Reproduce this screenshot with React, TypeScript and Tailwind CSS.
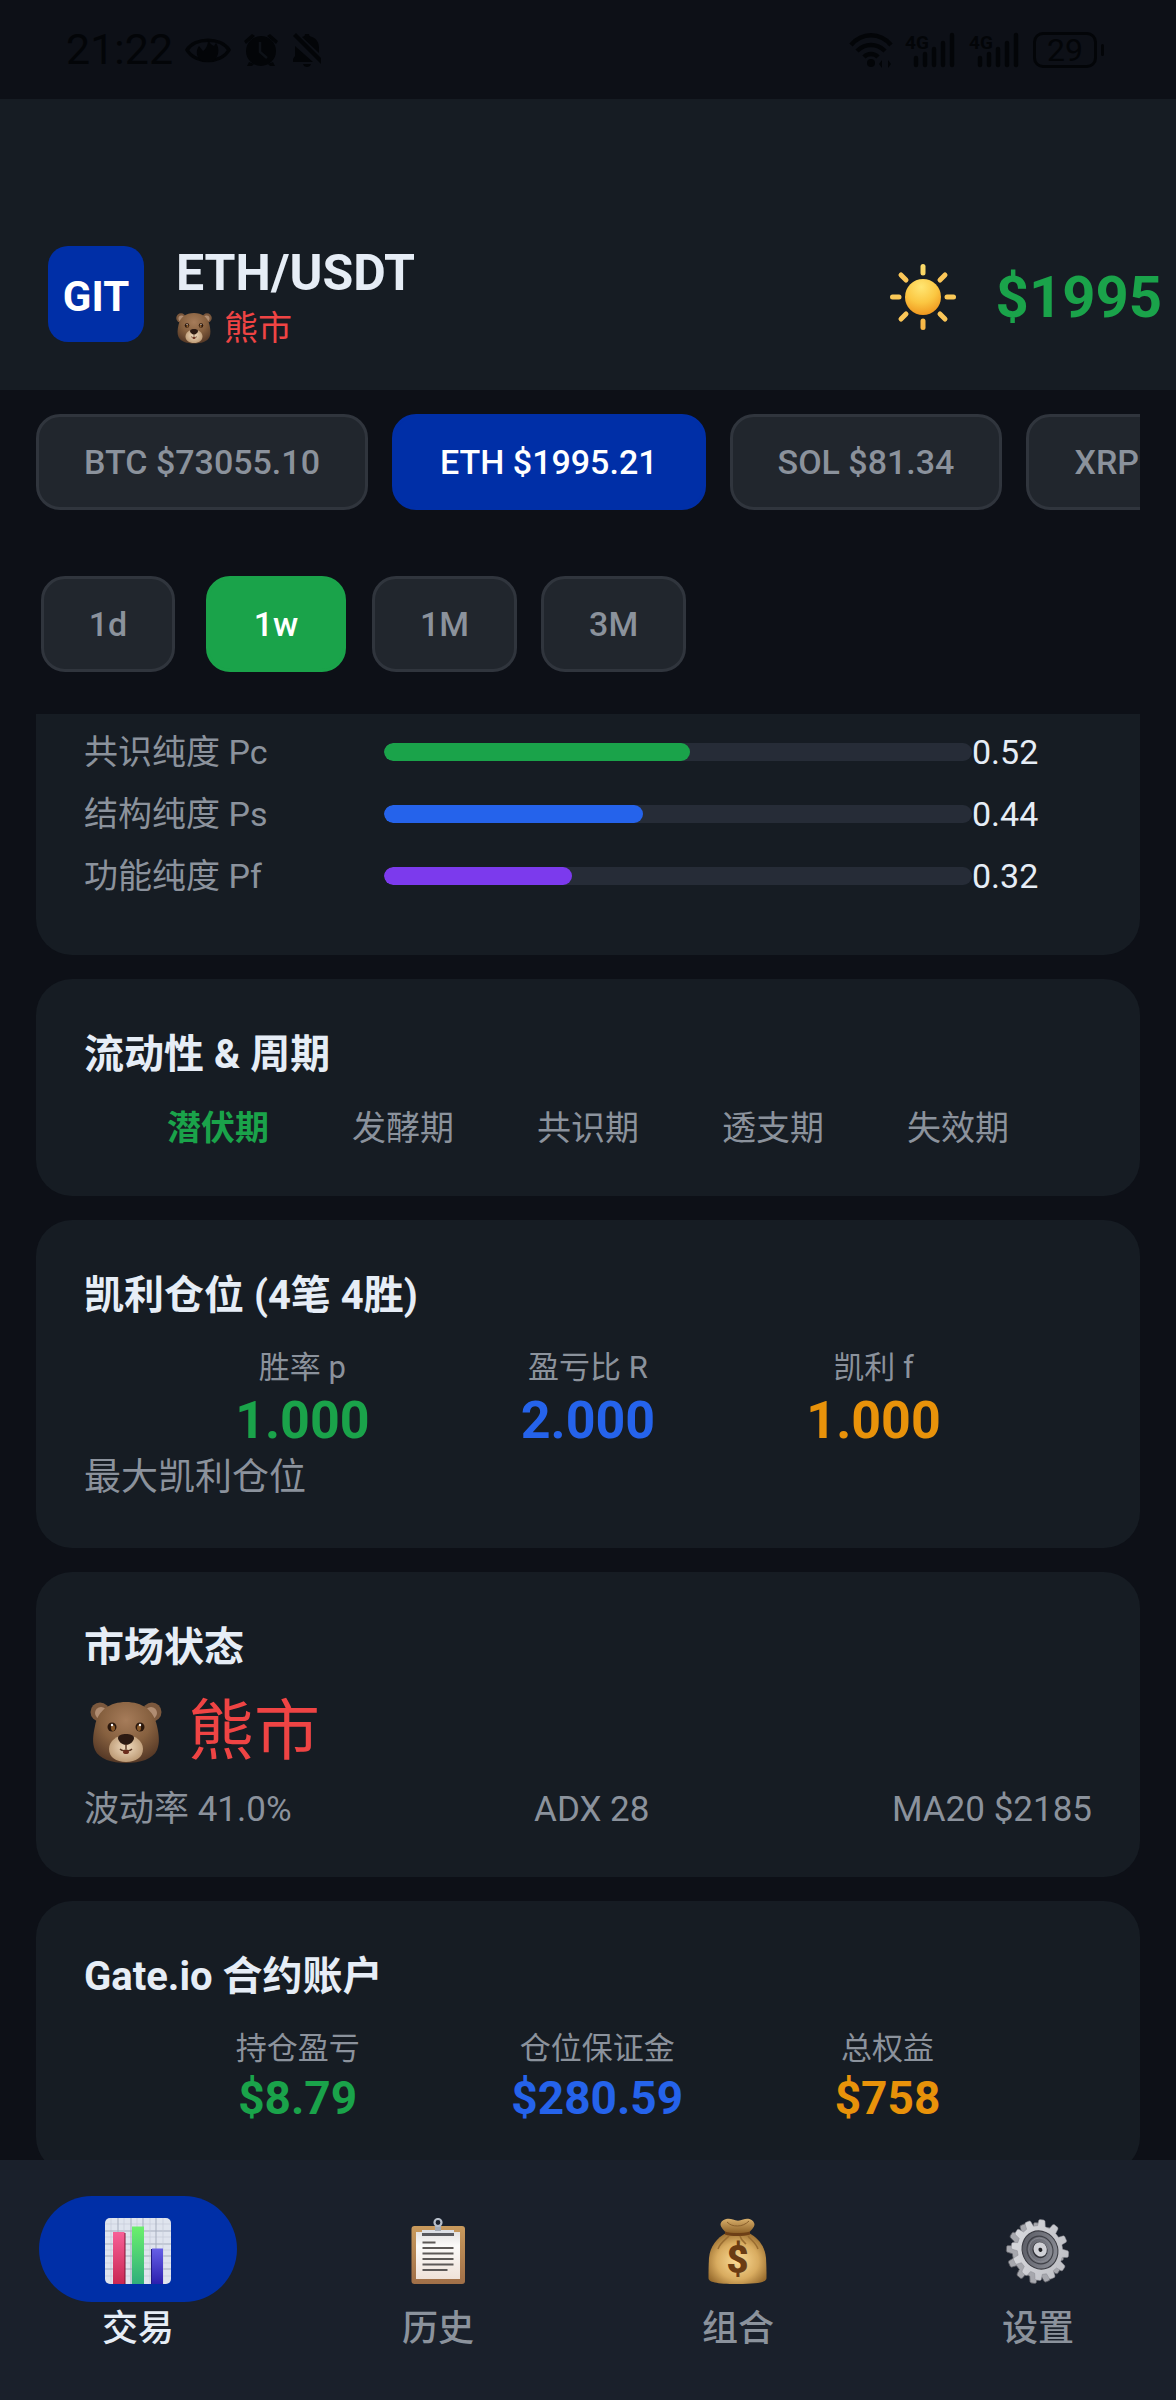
import { useState } from "react";
import clsx from "clsx";

const coins = [
  { symbol: "BTC", price: "73055.10" },
  { symbol: "ETH", price: "1995.21" },
  { symbol: "SOL", price: "81.34" },
  { symbol: "XRP", price: "1.35" },
];

const periods = ["1d", "1w", "1M", "3M"];

const purity = [
  { label: "共识纯度 Pc", value: 0.52, color: "bg-[#1aa34a]" },
  { label: "结构纯度 Ps", value: 0.44, color: "bg-[#2563eb]" },
  { label: "功能纯度 Pf", value: 0.32, color: "bg-[#7c3aed]" },
];

const stages = ["潜伏期", "发酵期", "共识期", "透支期", "失效期"];

const kelly = [
  { label: "胜率 p", value: "1.000", color: "text-[#1aa34a]" },
  { label: "盈亏比 R", value: "2.000", color: "text-[#2563eb]" },
  { label: "凯利 f", value: "1.000", color: "text-[#e8920a]" },
];

const account = [
  { label: "持仓盈亏", value: "$8.79", color: "text-[#1aa34a]" },
  { label: "仓位保证金", value: "$280.59", color: "text-[#2563eb]" },
  { label: "总权益", value: "$758", color: "text-[#e8920a]" },
];

const tabs = [
  { label: "交易", icon: <ChartIcon /> },
  { label: "历史", icon: <ClipboardIcon /> },
  { label: "组合", icon: <MoneyBagIcon /> },
  { label: "设置", icon: <GearIcon /> },
];

function BearIcon({ id, className }: { id: string; className: string }) {
  return (
    <svg viewBox="0 0 72 62" className={className} aria-hidden="true">
      <defs>
        <radialGradient id={`${id}-fur`} cx="50%" cy="30%" r="70%">
          <stop offset="0" stopColor="#a67c5a" />
          <stop offset="0.55" stopColor="#86603f" />
          <stop offset="1" stopColor="#573a27" />
        </radialGradient>
        <radialGradient id={`${id}-muzzle`} cx="50%" cy="45%" r="60%">
          <stop offset="0" stopColor="#f1dcc0" />
          <stop offset="1" stopColor="#b8956f" />
        </radialGradient>
      </defs>
      <circle cx="10" cy="11" r="9.5" fill="#7b583d" />
      <circle cx="62" cy="11" r="9.5" fill="#7b583d" />
      <circle cx="11" cy="12" r="6" fill="#b08d72" />
      <circle cx="61" cy="12" r="6" fill="#b08d72" />
      <path
        d="M36 1C52 1 64 9 67 25c2 9 3 17 0 24-4 9-17 13-31 13S9 58 5 49c-3-7-2-15 0-24C8 9 20 1 36 1Z"
        fill={`url(#${id}-fur)`}
      />
      <path
        d="M36 34c9 0 17 6 17 14S46 61 36 61s-17-5-17-13 8-14 17-14Z"
        fill={`url(#${id}-muzzle)`}
      />
      <path d="M28 37c0-3 4-4 8-4s8 1 8 4-4 7-8 7-8-4-8-7Z" fill="#2c1a12" />
      <path d="M36 43v5M30 48c2 2 4 2 6 1 2 1 4 1 6-1" fill="none" stroke="#5a3723" strokeWidth="1.4" />
      <ellipse cx="36" cy="51" rx="3" ry="2" fill="#6b2d1d" />
      <ellipse cx="22" cy="26" rx="4.5" ry="4.5" fill="#2a170c" />
      <ellipse cx="50" cy="26" rx="4.5" ry="4.5" fill="#2a170c" />
      <ellipse cx="23" cy="27" rx="2" ry="3" fill="#8a5a2b" />
      <ellipse cx="49" cy="27" rx="2" ry="3" fill="#8a5a2b" />
      <circle cx="22" cy="24" r="1.2" fill="#fff" />
      <circle cx="50" cy="24" r="1.2" fill="#fff" />
    </svg>
  );
}

function SunIcon() {
  return (
    <svg viewBox="0 0 66 66" className="size-[66px]" aria-hidden="true">
      <defs>
        <radialGradient id="sun-disc" cx="45%" cy="22%" r="80%">
          <stop offset="0" stopColor="#ffe673" />
          <stop offset="0.55" stopColor="#fbc742" />
          <stop offset="1" stopColor="#ef951d" />
        </radialGradient>
        <linearGradient id="sun-ray" gradientUnits="userSpaceOnUse" x1="0" y1="0" x2="0" y2="66">
          <stop offset="0" stopColor="#fbdc6a" />
          <stop offset="1" stopColor="#f9b544" />
        </linearGradient>
      </defs>
      <circle cx="33" cy="33" r="18" fill="url(#sun-disc)" />
      <g fill="url(#sun-ray)">
        <rect x="30.5" y="0" width="5" height="11.5" rx="2.5" />
        <rect x="30.5" y="54.5" width="5" height="11.5" rx="2.5" />
        <rect x="0" y="30.5" width="11.5" height="5" rx="2.5" />
        <rect x="54.5" y="30.5" width="11.5" height="5" rx="2.5" />
      </g>
      <path
        d="m11 11 5 5M55 11l-5 5M11 55l5-5M55 55l-5-5"
        stroke="#fbc658"
        strokeWidth="5"
        strokeLinecap="round"
      />
    </svg>
  );
}

function ChartIcon() {
  const lines = [6, 13, 19, 26, 32, 38, 45, 51, 58];
  return (
    <svg viewBox="0 0 66 66" className="size-[66px]" aria-hidden="true">
      <defs>
        <linearGradient id="bar-red" x2="0" y2="1">
          <stop stopColor="#f75f97" />
          <stop offset="1" stopColor="#c92753" />
        </linearGradient>
        <linearGradient id="bar-green" x2="0" y2="1">
          <stop stopColor="#6bf06c" />
          <stop offset="1" stopColor="#2fae7c" />
        </linearGradient>
        <linearGradient id="bar-blue" x2="0" y2="1">
          <stop stopColor="#665fe6" />
          <stop offset="1" stopColor="#2b1fae" />
        </linearGradient>
      </defs>
      <rect width="66" height="66" rx="5" fill="#dfe4ee" />
      {lines.map((n, i) => (
        <path
          key={n}
          d={`M${n} 0V66M0 ${n}H66`}
          stroke={i % 2 ? "#a5adbd" : "#c6ccd8"}
          strokeWidth={i % 2 ? 1 : 0.7}
        />
      ))}
      <path d="M19 15h1.5V66H19Z" fill="#7d1434" />
      <rect x="8" y="14" width="11.5" height="52" fill="url(#bar-red)" />
      <rect x="27" y="8.5" width="12" height="57.5" fill="url(#bar-green)" />
      <path d="M46 31h1v35h-1Z" fill="#22187f" />
      <rect x="47" y="30.5" width="11" height="35.5" fill="url(#bar-blue)" />
    </svg>
  );
}

function ClipboardIcon() {
  return (
    <svg viewBox="0 0 66 66" className="size-[66px]" aria-hidden="true">
      <defs>
        <linearGradient id="board" x2="0" y2="1">
          <stop stopColor="#c99a5c" />
          <stop offset="1" stopColor="#a06f48" />
        </linearGradient>
        <linearGradient id="paper" x2="0" y2="1">
          <stop stopColor="#e4e2e2" />
          <stop offset="0.3" stopColor="#fbfaf9" />
          <stop offset="1" stopColor="#efe2d8" />
        </linearGradient>
      </defs>
      <rect x="6.5" y="8" width="53.5" height="58" rx="3" fill="url(#board)" />
      <rect x="11" y="14" width="44" height="47" fill="url(#paper)" />
      <path d="M17 13h32v5H17Z" fill="#58595e" />
      <path d="M17 12h32v3H17Z" fill="#dcdfe5" />
      <path d="M30 8h6v5h-6Z" fill="#a4abb5" />
      <circle cx="33" cy="4.5" r="3.5" fill="none" stroke="#b8bfca" strokeWidth="2.2" />
      <path
        d="M17.5 24.5h13M17.5 30h31M17.5 35.5h31M17.5 41h31M17.5 46.5h31M17.5 52h25"
        stroke="#5d5957"
        strokeWidth="2"
      />
    </svg>
  );
}

function MoneyBagIcon() {
  return (
    <svg viewBox="0 0 66 66" className="size-[66px]" aria-hidden="true">
      <defs>
        <radialGradient id="bag" cx="50%" cy="55%" r="60%">
          <stop offset="0" stopColor="#fbdc97" />
          <stop offset="0.6" stopColor="#d9ac60" />
          <stop offset="1" stopColor="#95692c" />
        </radialGradient>
        <linearGradient id="bag-neck" x2="0" y2="1">
          <stop stopColor="#d8ae6a" />
          <stop offset="1" stopColor="#8e6228" />
        </linearGradient>
      </defs>
      <path
        d="M15.5 6C17 1 23 0 28 1.5c3 1.5 7 1.5 10 0C43 0 48 1 49.5 6c0 4-4 6-5.5 9H21c-1.5-3-5.5-5-5.5-9Z"
        fill="url(#bag-neck)"
      />
      <path d="M22 4c3 3 6 4 10.5 4S41 6 44 3" fill="none" stroke="#8a602c" strokeWidth="1" />
      <path
        d="M21 15h23c9 5 16 13 17 25 .5 8 .5 14 .5 20 0 4-7 6-29 6s-29-2-29-6c0-6 0-12 .5-20C5 28 12 20 21 15Z"
        fill="url(#bag)"
      />
      <path d="M20 13.5c6 2 18 2 25 0v3c-7 2-19 2-25 0Z" fill="#6d3f16" />
      <path
        d="M24 18c-4 4-9 7-11 13M35 18c1 4 4 6 6 8M43 18c3 4 8 7 10 13"
        fill="none"
        stroke="#9a6d31"
        strokeWidth="1.5"
      />
      <text
        x="32.5"
        y="55"
        textAnchor="middle"
        fontFamily="Roboto, sans-serif"
        fontWeight="900"
        fontSize="38"
        fill="#6b3c13"
      >
        $
      </text>
    </svg>
  );
}

// outline of a toothed wheel around 0,0
function gearPath(teeth: number, outer: number, inner: number) {
  const step = (Math.PI * 2) / teeth;
  const points: string[] = [];
  for (let i = 0; i < teeth; i++) {
    const a = i * step;
    [
      [inner, -0.32],
      [outer - 1, -0.22],
      [outer, -0.14],
      [outer, 0.14],
      [outer - 1, 0.22],
      [inner, 0.32],
    ].forEach(([r, k]) => {
      const t = a + k * step;
      points.push(`${(Math.cos(t) * r).toFixed(2)} ${(Math.sin(t) * r).toFixed(2)}`);
    });
  }
  return `M${points.join("L")}Z`;
}

function GearIcon() {
  const wheel = gearPath(12, 32, 25.5);
  return (
    <svg viewBox="0 0 66 66" className="size-[66px]" aria-hidden="true">
      <defs>
        <linearGradient id="gear-face" x2="1" y2="1">
          <stop stopColor="#dcdde1" />
          <stop offset="1" stopColor="#babbc1" />
        </linearGradient>
        <linearGradient id="gear-dish" x2="1" y2="1">
          <stop stopColor="#55575f" />
          <stop offset="1" stopColor="#92949d" />
        </linearGradient>
      </defs>
      <g transform="translate(30 35) rotate(-24) scale(.88 .97)">
        <path d={wheel} fill="#a7a8ae" stroke="#5b5c63" strokeWidth="0.8" />
      </g>
      <g transform="translate(35 32) rotate(-24) scale(.88 .97)">
        <path d={wheel} fill="url(#gear-face)" stroke="#8a8b92" strokeWidth="0.5" />
        <circle r="20" fill="url(#gear-dish)" stroke="#3c3d44" strokeWidth="1.2" />
        <circle r="14.5" fill="none" stroke="#3f4047" strokeWidth="1.2" />
        <circle r="12.5" fill="none" stroke="#8b8c94" strokeWidth="0.8" />
        <circle r="8.5" fill="#33343a" />
        <circle cx="0.5" cy="-0.5" r="7.5" fill="#d0d1d6" />
        <circle cx="0.5" r="2.2" fill="#1d1e22" />
      </g>
    </svg>
  );
}

function SignalIcon() {
  return (
    <svg viewBox="0 0 52 36" className="h-9 w-[52px]" aria-hidden="true">
      <text x="0" y="17" fontFamily="Roboto, sans-serif" fontWeight="700" fontSize="19" fill="currentColor">
        4G
      </text>
      <path
        d="M11 26v7M20 22v11M29 17v16M38 11v22M47 3v30"
        stroke="currentColor"
        strokeWidth="4.5"
        strokeLinecap="round"
      />
    </svg>
  );
}

function StatusBar() {
  return (
    <div className="flex h-[99px] shrink-0 items-center justify-between pr-[72px] pl-[66px] text-[#030508]">
      <div className="flex items-center gap-3">
        <span className="text-[43px] leading-none">21:22</span>
        <svg viewBox="0 0 46 32" className="h-8 w-[46px]" aria-hidden="true">
          <path d="M2 16C10 3 36 3 44 16 36 30 10 30 2 16Z" fill="none" stroke="currentColor" strokeWidth="3.5" />
          <path d="M23 6c2 3 3 5 6 6l2-3c5 7 2 19-8 19s-14-9-9-16l4 5c3-2 5-6 5-11Z" fill="currentColor" />
        </svg>
        <svg viewBox="0 0 36 36" className="size-9" aria-hidden="true">
          <path d="M1 9 9 2l3 2-9 8ZM35 9l-8-7-3 2 9 8Z" fill="currentColor" />
          <path d="m6 30-2 4h5l2-2M30 30l2 4h-5l-2-2" fill="currentColor" />
          <circle cx="18" cy="19" r="15" fill="currentColor" />
          <path d="M17 10v10l7 6" fill="none" stroke="#0d1117" strokeWidth="2.5" />
        </svg>
        <svg viewBox="0 0 32 36" className="h-9 w-8" aria-hidden="true">
          <path
            d="M2 4 30 32v-6L5 1ZM11 5c2-1 3-1 3-3h4c0 2 1 2 3 3 5 2 7 6 7 11v5ZM4 14l18 16H2v-3l2-3ZM12 32h8c-1 4-7 4-8 0Z"
            fill="currentColor"
          />
        </svg>
      </div>
      <div className="flex items-center gap-3">
        <svg viewBox="0 0 44 36" className="h-9 w-11" aria-hidden="true">
          <path
            d="M2 13C13 0 31 0 42 13M8 19c8-8 20-8 28 0M15 25c4-4 10-4 14 0"
            fill="none"
            stroke="currentColor"
            strokeWidth="4.5"
          />
          <circle cx="22" cy="31" r="4" fill="currentColor" />
          <path d="m30 32 3-4v8ZM42 32l-3-4v8Z" fill="currentColor" />
        </svg>
        <SignalIcon />
        <SignalIcon />
        <div className="flex items-center gap-1">
          <span className="flex h-9 w-16 items-center justify-center rounded-[10px] border-[3px] border-current text-[32px] leading-none">
            29
          </span>
          <span className="h-3 w-[3px] rounded-full bg-current" />
        </div>
      </div>
    </div>
  );
}

function Chip({
  active,
  activeClass,
  onClick,
  children,
}: {
  active: boolean;
  activeClass: string;
  onClick: () => void;
  children: React.ReactNode;
}) {
  return (
    <button
      type="button"
      aria-pressed={active}
      onClick={onClick}
      className={clsx(
        "h-24 shrink-0 rounded-3xl border-[3px] px-[45px] text-[34px] font-medium whitespace-nowrap",
        active ? activeClass : "border-[#30353d] bg-[#21262d] text-[#8b929c]"
      )}
    >
      {children}
    </button>
  );
}

function Card({ title, children }: { title: string; children: React.ReactNode }) {
  return (
    <section className="shrink-0 rounded-[36px] bg-[#161c23] px-12 pt-12 pb-[46px]">
      <h2 className="mb-6 text-[40px] leading-[56px] font-bold text-[#e6edf6]">{title}</h2>
      {children}
    </section>
  );
}

function Stats({ items, valueClass }: { items: typeof kelly; valueClass: string }) {
  return (
    <dl className="flex justify-evenly">
      {items.map((item) => (
        <div key={item.label} className="flex flex-col items-center">
          <dt className="text-[31px] leading-10">{item.label}</dt>
          <dd className={clsx("font-bold", valueClass, item.color)}>{item.value}</dd>
        </div>
      ))}
    </dl>
  );
}

export default function App() {
  const [coin, setCoin] = useState("ETH");
  const [period, setPeriod] = useState("1w");
  const [tab, setTab] = useState("交易");

  return (
    <div
      lang="zh-CN"
      className="flex h-screen flex-col overflow-hidden bg-[#0d1017] font-[Roboto,'Noto_Sans_CJK_SC',sans-serif] text-[#8b929c]"
    >
      <StatusBar />

      <header className="flex shrink-0 items-center justify-between bg-[#161c23] pt-[137px] pr-[14px] pb-[38px] pl-12">
        <div className="flex items-center gap-8">
          <div className="flex size-24 items-center justify-center rounded-[20px] bg-[#002fa7] pt-1 text-[42px] font-bold text-white">
            GIT
          </div>
          <div className="pt-[6px]">
            <h1 className="text-[50px] leading-[62px] font-bold text-[#e6edf6]">ETH/USDT</h1>
            <p className="flex items-center gap-3 text-[34px] leading-[48px] text-[#ef4444]">
              <BearIcon id="bear-sm" className="h-8 w-9" />
              熊市
            </p>
          </div>
        </div>
        <div className="flex items-center gap-10 pt-[6px]">
          <button type="button" aria-label="切换主题">
            <SunIcon />
          </button>
          <span className="text-[58px] leading-none font-bold text-[#1aa34a]">$1995</span>
        </div>
      </header>

      <div className="mx-9 flex shrink-0 gap-6 overflow-hidden pt-6">
        {coins.map((c) => (
          <Chip
            key={c.symbol}
            active={coin === c.symbol}
            activeClass="border-[#002fa7] bg-[#002fa7] text-white"
            onClick={() => setCoin(c.symbol)}
          >
            {c.symbol} ${c.price}
          </Chip>
        ))}
      </div>

      <div className="mx-9 flex shrink-0 gap-6 pt-[66px] pb-[42px]">
        {periods.map((p) => (
          <div key={p} className="flex min-w-36 justify-center">
            <Chip
              active={period === p}
              activeClass="border-[#1aa34a] bg-[#1aa34a] text-white"
              onClick={() => setPeriod(p)}
            >
              {p}
            </Chip>
          </div>
        ))}
      </div>

      <main className="flex min-h-0 flex-1 flex-col gap-6 overflow-y-auto px-9 [scrollbar-width:none]">
        <section className="shrink-0 rounded-b-[36px] bg-[#161c23] px-12 pt-[7px] pb-12">
          {purity.map((row) => (
            <div key={row.label} className="flex h-[62px] items-center text-[34px]">
              <span className="w-[300px]">{row.label}</span>
              <div className="h-[18px] flex-1 overflow-hidden rounded-full bg-[#262c37]">
                <div className={clsx("h-full rounded-full", row.color)} style={{ width: `${row.value * 100}%` }} />
              </div>
              <span className="w-[120px] text-[#e6edf6]">{row.value.toFixed(2)}</span>
            </div>
          ))}
        </section>

        <Card title="流动性 & 周期">
          <ul className="flex justify-evenly text-[34px] leading-[43px]">
            {stages.map((stage, i) => (
              <li key={stage} className={clsx(i === 0 && "font-bold text-[#1aa34a]")}>
                {stage}
              </li>
            ))}
          </ul>
        </Card>

        <Card title="凯利仓位 (4笔 4胜)">
          <Stats items={kelly} valueClass="text-[52px] leading-[66px]" />
          <p className="text-[37px] leading-[48px]">最大凯利仓位</p>
        </Card>

        <Card title="市场状态">
          <p className="mb-6 flex items-center gap-[26px] pl-[6px] text-[66px] leading-[64px] text-[#ef4444]">
            <BearIcon id="bear-lg" className="h-[62px] w-[72px]" />
            熊市
          </p>
          <div className="flex justify-between text-[35px] leading-[43px]">
            <span>波动率 41.0%</span>
            <span>ADX 28</span>
            <span>MA20 $2185</span>
          </div>
        </Card>

        <Card title="Gate.io 合约账户">
          <Stats items={account} valueClass="text-[46px] leading-[58px]" />
        </Card>
      </main>

      <nav className="flex shrink-0 gap-6 bg-[#1a202b] pt-9 pb-11">
        {tabs.map((t) => (
          <button
            key={t.label}
            type="button"
            aria-current={tab === t.label ? "page" : undefined}
            onClick={() => setTab(t.label)}
            className="flex flex-1 flex-col items-center"
          >
            <span
              className={clsx(
                "flex h-[106px] w-[198px] items-center justify-center rounded-full pt-1",
                tab === t.label && "bg-[#002fa7]"
              )}
            >
              {t.icon}
            </span>
            <span className={clsx("text-[36px] leading-[54px] font-medium", tab === t.label && "text-[#e6edf6]")}>
              {t.label}
            </span>
          </button>
        ))}
      </nav>
    </div>
  );
}
